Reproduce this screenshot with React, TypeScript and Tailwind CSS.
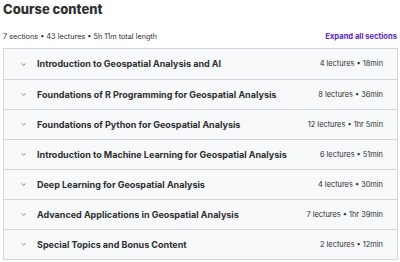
import { ChevronDown } from "lucide-react"

const sections = [
  { title: "Introduction to Geospatial Analysis and AI", meta: "4 lectures • 18min" },
  { title: "Foundations of R Programming for Geospatial Analysis", meta: "8 lectures • 36min" },
  { title: "Foundations of Python for Geospatial Analysis", meta: "12 lectures • 1hr 5min" },
  { title: "Introduction to Machine Learning for Geospatial Analysis", meta: "6 lectures • 51min" },
  { title: "Deep Learning for Geospatial Analysis", meta: "4 lectures • 30min" },
  { title: "Advanced Applications in Geospatial Analysis", meta: "7 lectures • 1hr 39min" },
  { title: "Special Topics and Bonus Content", meta: "2 lectures • 12min" },
]

export default function App() {
  return (
    <div className="w-[400px] h-[262px] bg-white text-[#2d2f31] font-['Inter',sans-serif] overflow-hidden">
      <h2 className="px-[3px] pt-[1px] text-[13px] leading-[16px] font-extrabold">Course content</h2>

      <div className="flex items-end justify-between pl-[3px] pr-[3px] mt-[15px] h-[10px]">
        <span className="text-[7.3px] leading-[10px]">7 sections • 43 lectures • 5h 11m total length</span>
        <button className="text-[7.6px] leading-[10px] font-bold text-[#5624d0]">Expand all sections</button>
      </div>

      {/* Sections */}
      <div className="mx-[3px] mt-[6px] border border-[#d1d7dc] w-[395px]">
        {sections.map((s, i) => (
          <div
            key={i}
            className={`flex items-center h-[30px] bg-[#f7f9fa] pl-[16px] pr-[14px] ${i > 0 ? "border-t border-[#d1d7dc]" : ""}`}
          >
            <ChevronDown className="w-[7px] h-[7px] mr-[10px] text-[#4a4c4e]" strokeWidth={2.2} />
            <span className="flex-1 text-[9px] font-bold truncate">{s.title}</span>
            <span className="text-[7.4px]">{s.meta}</span>
          </div>
        ))}
      </div>
    </div>
  )
}
